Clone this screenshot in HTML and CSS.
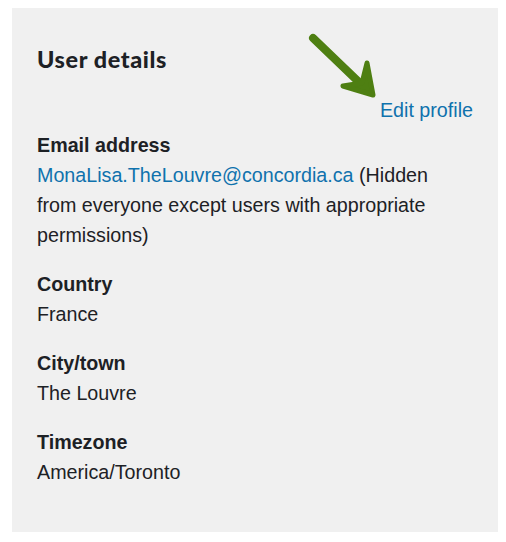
FILE: index.html
```html
<!DOCTYPE html>
<html lang="en">
<head>
    <meta charset="UTF-8">
    <meta name="viewport" content="width=device-width, initial-scale=1.0">
    <title>User details</title>
    <link rel="stylesheet" href="styles.css">
</head>
<body>
    <section class="card">
        <h2 class="card-title">User details</h2>

        <!-- annotation arrow pointing at the edit link -->
        <svg class="pointer" width="90" height="80" viewBox="0 0 90 80">
            <line x1="13" y1="13" x2="64" y2="62" stroke="#4e7f12" stroke-width="8" stroke-linecap="round"/>
            <polygon points="43,61 73,70 67,38 62,58" fill="#4e7f12" stroke="#4e7f12" stroke-width="5" stroke-linejoin="round"/>
        </svg>

        <div class="edit-row">
            <a href="#" class="link">Edit profile</a>
        </div>

        <dl class="details">
            <div class="item">
                <dt>Email address</dt>
                <dd><a href="#" class="link">MonaLisa.TheLouvre@concordia.ca</a> (Hidden from everyone except users with appropriate permissions)</dd>
            </div>
            <div class="item">
                <dt>Country</dt>
                <dd>France</dd>
            </div>
            <div class="item">
                <dt>City/town</dt>
                <dd>The Louvre</dd>
            </div>
            <div class="item">
                <dt>Timezone</dt>
                <dd>America/Toronto</dd>
            </div>
        </dl>
    </section>
</body>
</html>
```

FILE: styles.css
```css
body {
    margin: 0;
    background: #ffffff;
    font-family: "Liberation Sans", Arial, sans-serif;
    color: #1d2125;
}

.card {
    position: relative;
    box-sizing: border-box;
    width: 486px;
    height: 524px;
    margin: 8px 0 0 12px;
    padding: 36px 25px 0;
    background: #f0f0f0;
}

.card-title {
    margin: 0;
    font-family: Lato, "Open Sans", sans-serif;
    font-weight: 900;
    font-size: 23.4px;
    line-height: 30px;
    letter-spacing: 0.6px;
    color: #1d2125;
}

.pointer {
    position: absolute;
    left: 288px;
    top: 17px;
}

.edit-row {
    display: flex;
    justify-content: flex-end;
    margin: 21px 0 5px;
    font-size: 19.7px;
    line-height: 30px;
}

.link {
    color: #0f72ad;
    text-decoration: none;
}

.details {
    margin: 0;
    font-size: 19.7px;
    line-height: 30px;
}

.item {
    margin-bottom: 19px;
}

.item dt {
    font-weight: bold;
}

.item dd {
    margin: 0;
    max-width: 425px;
}
```
